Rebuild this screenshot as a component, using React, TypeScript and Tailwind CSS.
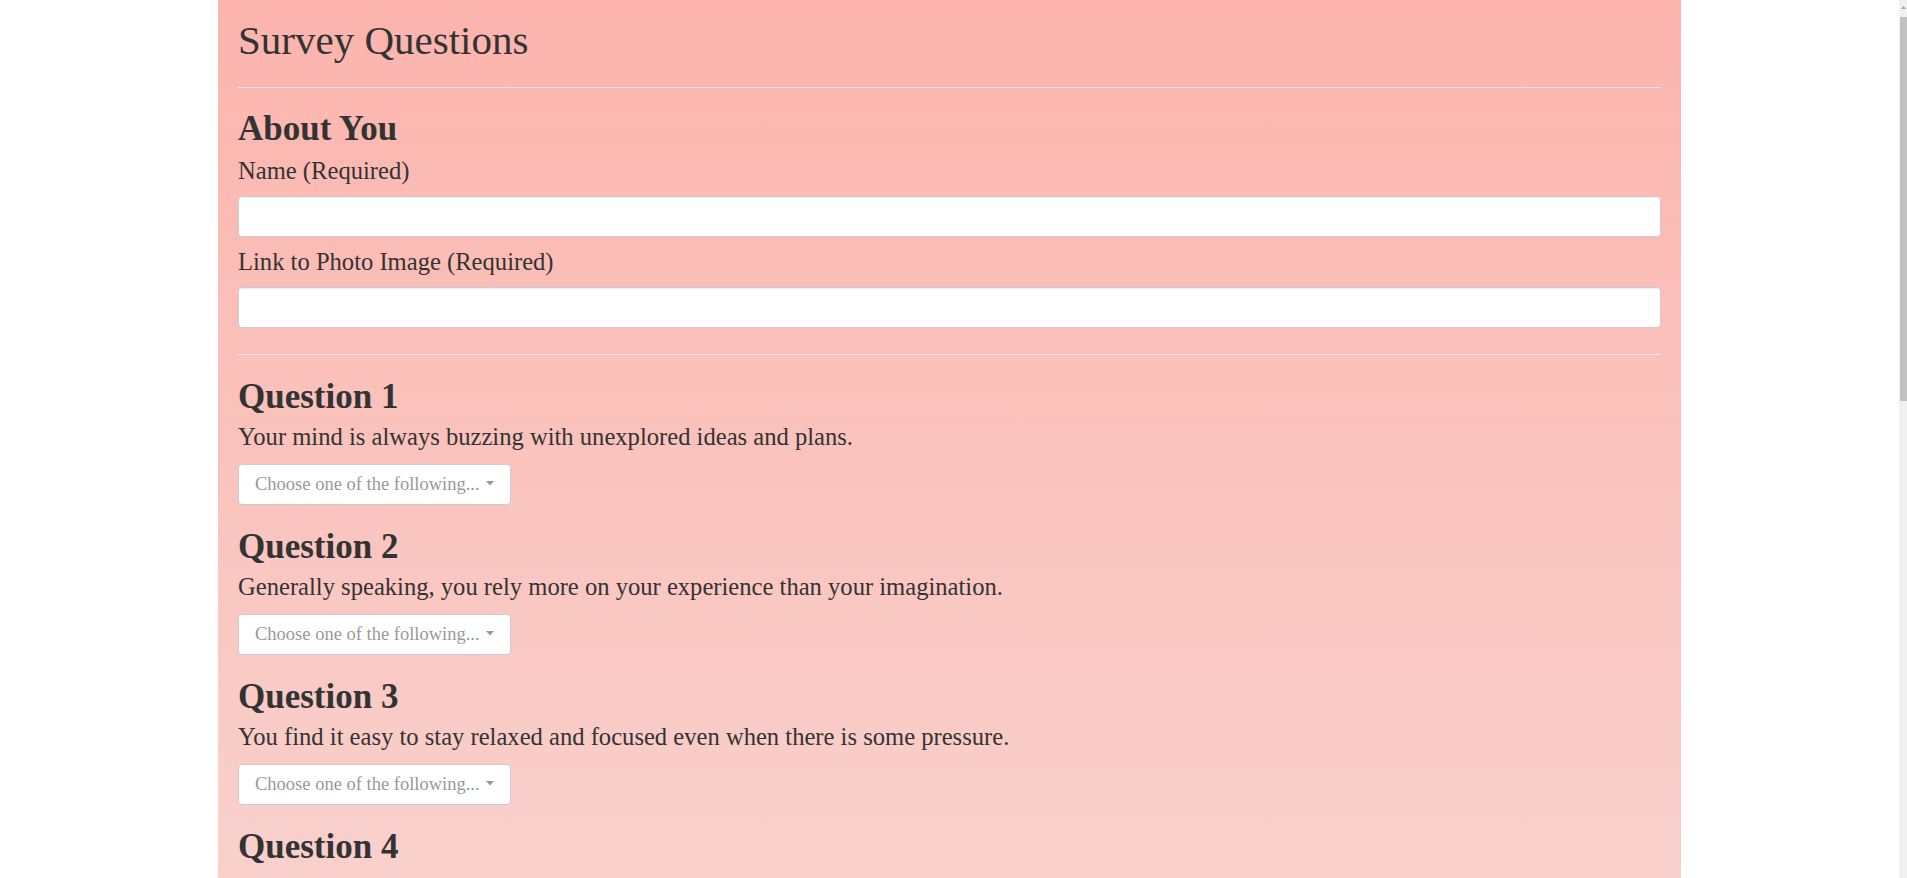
const questions: { id: number; text?: string }[] = [
  {
    id: 1,
    text: "Your mind is always buzzing with unexplored ideas and plans.",
  },
  {
    id: 2,
    text: "Generally speaking, you rely more on your experience than your imagination.",
  },
  {
    id: 3,
    text: "You find it easy to stay relaxed and focused even when there is some pressure.",
  },
  // the rest of question 4 sits below the fold
  { id: 4 },
];

function ChoiceSelect() {
  return (
    <button
      type="button"
      className="mt-[13px] flex h-[41px] w-[273px] items-center rounded border border-[#cccccc] bg-white pl-4 text-left text-[18.5px] text-[#999999]"
    >
      <span className="whitespace-nowrap">Choose one of the following...</span>
      <svg width="8" height="5" viewBox="0 0 8 5" className="-mt-0.5 ml-[6px] shrink-0">
        <path d="M0 0h8L4 4.5z" fill="#999999" />
      </svg>
    </button>
  );
}

export default function App() {
  return (
    <div className="flex h-screen overflow-hidden bg-white font-[Georgia,'Liberation_Serif',serif] text-[#333333]">
      <div className="flex-1 overflow-hidden">
        <div className="mx-auto w-[1463px] bg-linear-to-b from-[#fcb4ad] to-[#f8d5d2] px-5 pb-40 pt-[19px]">
          <h1 className="text-[41px] leading-[43px]">Survey Questions</h1>
          <hr className="mt-[25px] border-[#f4e6e4]" />

          <h2 className="mt-[23px] text-[35px] font-bold leading-[36px]">About You</h2>
          <label className="mt-[10px] block text-[24.6px] leading-[28px]">Name (Required)</label>
          <input
            type="text"
            className="mt-[11px] block h-[41px] w-full rounded border border-[#cccccc] bg-white px-3 shadow-[inset_0_1px_1px_rgba(0,0,0,0.075)]"
          />
          <label className="mt-[11px] block text-[24.6px] leading-[28px]">
            Link to Photo Image (Required)
          </label>
          <input
            type="text"
            className="mt-[11px] block h-[41px] w-full rounded border border-[#cccccc] bg-white px-3 shadow-[inset_0_1px_1px_rgba(0,0,0,0.075)]"
          />
          <hr className="mt-[26px] border-[#f4e6e4]" />

          <div className="mt-[24px] flex flex-col gap-[24px]">
            {questions.map((q) => (
              <div key={q.id}>
                <h3 className="text-[35px] font-bold leading-[36px]">Question {q.id}</h3>
                {q.text && (
                  <>
                    <p className="mt-[8px] text-[24.6px] leading-[28px]">{q.text}</p>
                    <ChoiceSelect />
                  </>
                )}
              </div>
            ))}
          </div>
        </div>
      </div>

      {/* scrollbar */}
      <div className="flex w-2 flex-col bg-[#f1f1f1]">
        <div className="flex h-[17px] items-start justify-end pr-px pt-[6px]">
          <svg width="5" height="3" viewBox="0 0 5 3">
            <path d="M0 3L2.5 0 5 3z" fill="#a3a3a3" />
          </svg>
        </div>
        <div className="ml-px h-[384px] bg-[#c1c1c1]" />
      </div>
    </div>
  );
}
